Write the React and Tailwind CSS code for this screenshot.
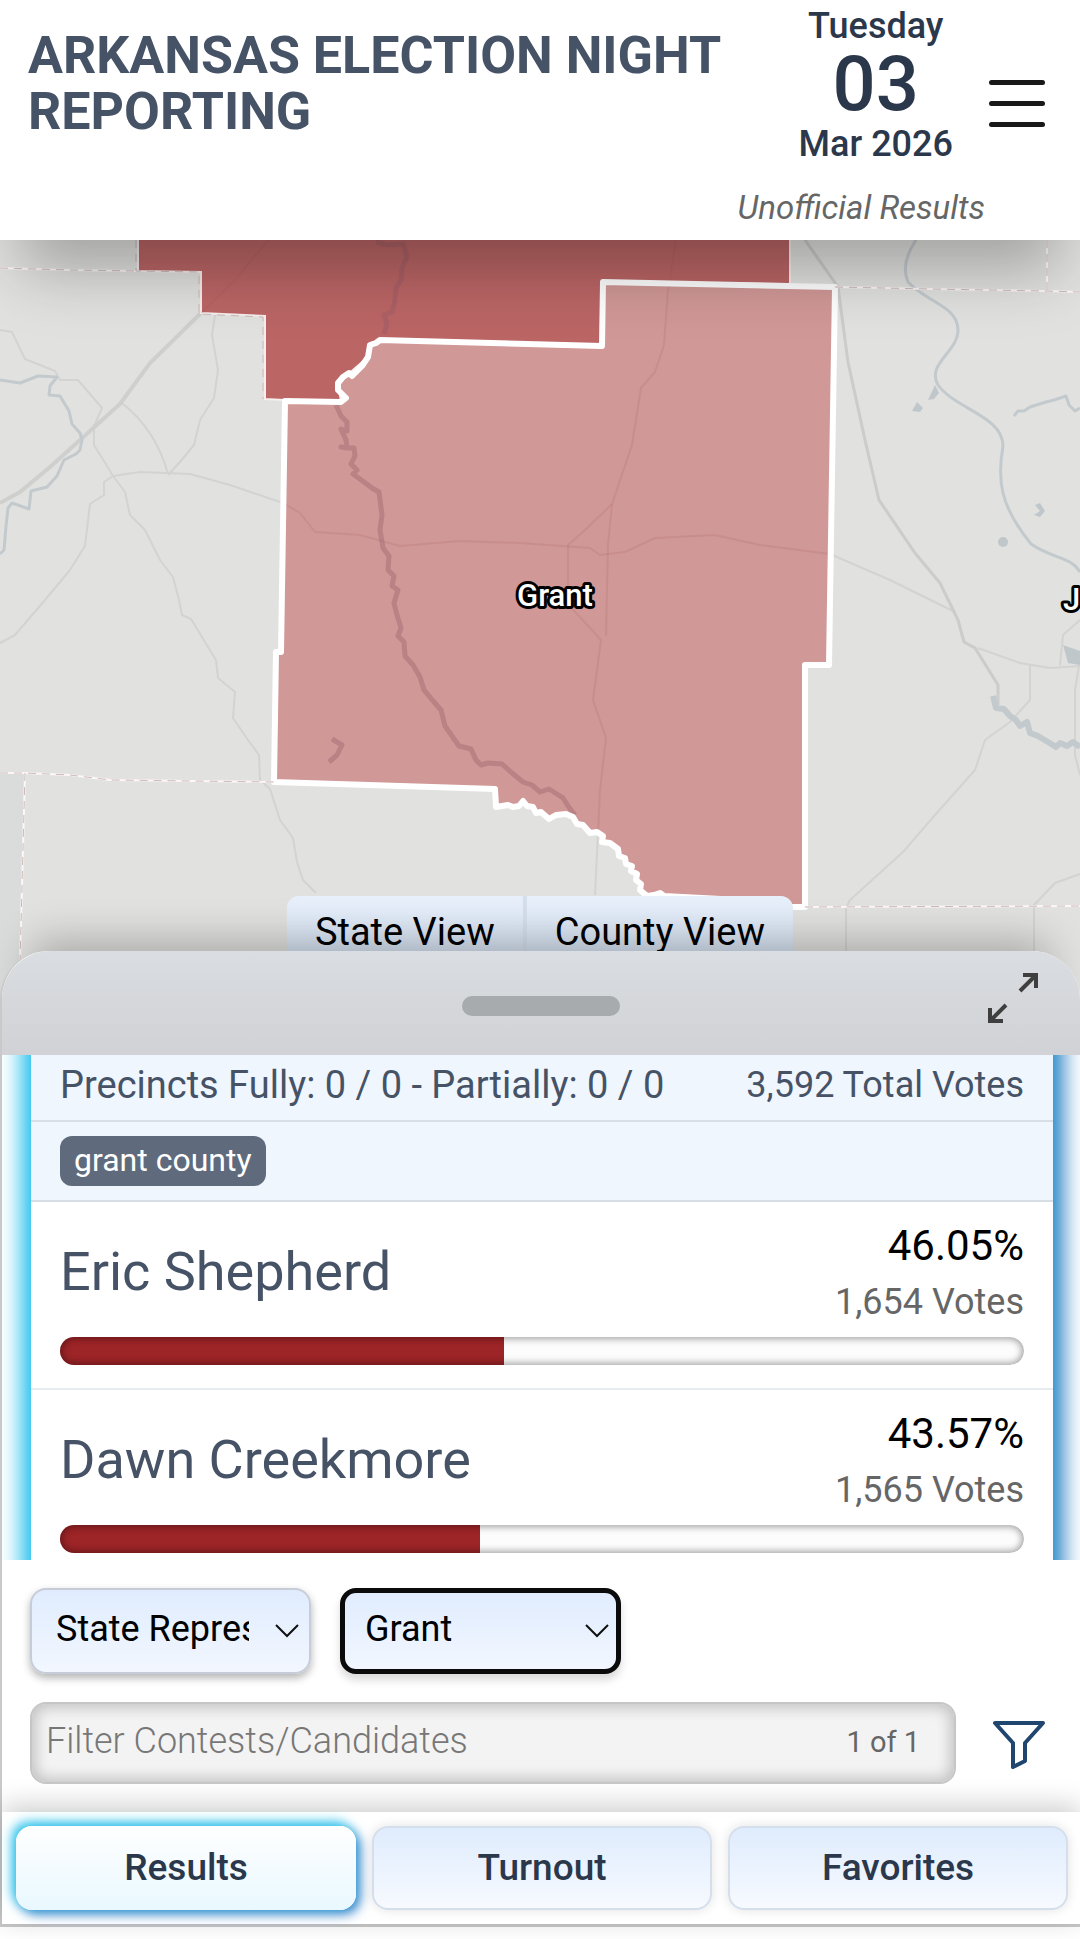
import { useState } from 'react';

const CANDIDATES = [
  { name: 'Eric Shepherd',  percent: 46.05, votes: '1,654' },
  { name: 'Dawn Creekmore', percent: 43.57, votes: '1,565' },
];

const TABS = ['Results', 'Turnout', 'Favorites'];

const GRANT_OUTLINE =
  'M285 401 L341 402 L346 398 L338 390 L338 383 L343 377 L349 373 L352 376 L362 366 L368 357 L370 345 L376 343 L380 340 L602 346 L603 282 L835 287 L830 600 L829 665 L805 665 L805 907 L790 907 L740 900 L664 896 L660 893 L654 895 L647 896 L640 890 L641 884 L636 880 L637 874 L631 871 L632 866 L626 864 L625 858 L619 856 L618 849 L610 843 L602 842 L603 836 L597 832 L590 833 L583 825 L577 824 L573 817 L566 814 L556 815 L549 819 L541 812 L536 813 L533 807 L527 806 L523 801 L519 806 L513 807 L508 805 L496 807 L495 789 L274 782 L276 652 L281 652 Z';

const SALINE_OUTLINE =
  'M138 230 L138 271 L201 272 L201 313 L265 316 L265 399 L285 400 L341 402 L338 383 L368 357 L371 343 L380 340 L602 346 L603 282 L790 284 L790 230 Z';

// roads and rail lines
const ROADS = [
  'M268 240 L235 280 L200 314 L150 363 L120 404 L80 440 L50 467 L20 492 L0 503',
  'M215 315 L212 335 L218 370 L214 398 L200 420 L194 445 L180 462 L168 475',
  'M122 403 Q156 430 168 474',
  'M94 424 L94 445 L104 461 L113 476 L125 492 L130 515 L145 530 L160 560 L173 577 L179 600 L182 615 L191 619 L205 642 L216 660 L218 678 L235 692 L233 718 L248 740 L259 755 L260 780 L270 789 L280 820 L293 838 L297 862 L303 880 L316 893',
  'M113 476 L140 472 L190 474 L230 485 L283 503 L300 513 L315 532 L360 535 L400 546 L460 541 L520 543 L590 548 L600 555 L625 552 L655 538 L715 535 L760 545 L830 554 L890 580 L955 612',
  'M113 476 L104 482 L104 495 L90 504 L85 546 L70 570 L45 600 L15 635 L0 643',
  'M0 330 L12 332 L25 359 L55 371 L60 380 L78 380 L102 408 L95 424',
  'M676 240 L668 290 L664 345 L655 372 L641 388 L632 445 L612 504 L585 530 L568 545 L568 604 L601 640 L593 700 L606 738 L600 790 L595 895',
  'M612 504 L608 545 L606 636',
  'M805 240 L838 287 L848 362 L865 440 L879 500 L915 553 L940 583 L958 620 L964 642 L975 648 L998 685 L998 705',
  'M978 648 L1020 663 L1050 668 L1080 666',
  'M1080 620 L1063 635 L1060 665',
  'M1030 665 L1030 700 L1010 722 L985 740 L975 770 L935 815 L903 852 L850 900 L846 908 L846 960',
  'M1080 874 L1055 883 L1034 905 L1034 960',
  'M1080 660 L1075 690 L1075 755 L1080 775',
];

const RIVERS = [
  'M0 380 L20 383 L38 376 L57 377 L50 386 L49 395 L60 396 L69 411 L72 424 L80 433 L82 440 L80 450 L76 454 L64 460 L57 476 L47 487 L31 491 L29 509 L12 503 L8 508 L6 526 L4 550 L0 554',
  'M916 240 Q900 264 908 282 C926 302 958 306 958 330 C958 352 926 364 938 385 C955 409 1003 416 1003 446 C997 480 1000 506 1031 544 C1055 560 1070 556 1080 572',
  'M1014 416 L1018 411 L1024 411 L1030 407 L1046 402 L1054 400 L1066 396 L1069 405 L1075 411 L1080 408',
  'M993 696 L996 708 L1004 709 L1010 716 L1016 720 L1020 726 L1027 722 L1030 733 L1038 736 L1048 742 L1056 747 L1060 743 L1067 746 L1073 742 L1080 747',
];

const CREEKS = [
  'M376 242 L387 245 L403 244 L407 256 L402 268 L401 280 L396 288 L395 300 L392 312 L384 315 L387 323 L384 334',
  'M336 405 L341 416 L347 422 L347 431 L341 429 L346 440 L347 448 L341 447 L354 448 L355 456 L351 464 L357 470 L353 474 L364 482 L372 488 L379 492 L382 515 L380 530 L383 548 L389 556 L388 570 L394 576 L392 586 L398 590 L394 603 L397 615 L401 628 L398 636 L404 642 L405 656 L413 665 L420 677 L424 690 L434 702 L441 710 L445 726 L452 736 L459 746 L471 749 L476 760 L481 765 L488 763 L502 764 L512 773 L523 782 L532 785 L540 792 L549 789 L557 794 L563 798 L568 806 L575 815',
];

// dashed county borders
const BORDERS = [
  'M0 268 L70 270 L138 271',
  'M835 287 L930 289 L1046 291 L1080 292',
  'M1047 240 L1047 291',
  'M0 773 L25 773 L70 775 L110 780 L274 782',
  'M25 773 L19 1000',
  'M805 907 L1080 906',
];

function CountyMap() {
  return (
    <svg
      viewBox="0 240 1080 760"
      preserveAspectRatio="xMidYMin slice"
      className="block h-[760px] w-full"
      role="img"
      aria-label="Map of Grant county"
    >
      <defs>
        <clipPath id="counties">
          <path d={GRANT_OUTLINE} />
          <path d={SALINE_OUTLINE} />
        </clipPath>
      </defs>
      <rect x="0" y="230" width="1080" height="780" fill="#e1e1df" />
      <path d="M0 773 L25 773 L19 1000 L0 1000 Z" fill="#d9dcda" />

      <g fill="none" stroke="#d3d3d2" strokeWidth="2" strokeLinejoin="round">
        {ROADS.map((d) => <path key={d} d={d} />)}
      </g>
      <path d={ROADS[0]} fill="none" stroke="#cfcfce" strokeWidth="4" />
      <path d={ROADS[9]} fill="none" stroke="#cccccb" strokeWidth="3" />
      <g fill="none" stroke="#c3cace" strokeWidth="3" strokeLinejoin="round">
        {RIVERS.map((d) => <path key={d} d={d} />)}
      </g>
      <path d={RIVERS[3]} fill="none" stroke="#c3cace" strokeWidth="6" strokeLinejoin="round" />
      <g fill="#c0c7cb">
        <path d="M1063 645 L1080 651 L1080 665 L1068 663 Z" />
        <path d="M912 411 L917 402 L923 408 L920 412 Z" />
        <path d="M935 385 L939 393 L934 399 L928 400 Z" />
        <circle cx="1003" cy="542" r="5" />
        <path d="M1035 505 L1040 503 L1045 511 L1040 517 L1034 515 L1040 511 Z" />
      </g>

      <path d={SALINE_OUTLINE} fill="#bb6565" stroke="#f7eeee" strokeWidth="2" />
      <path d={GRANT_OUTLINE} fill="#d09896" />
      <g clipPath="url(#counties)" fill="none" stroke="#9c5459" strokeLinejoin="round">
        <g strokeOpacity="0.14" strokeWidth="2">
          {ROADS.map((d) => <path key={d} d={d} />)}
        </g>
        <g stroke="#935a66" strokeOpacity="0.35" strokeWidth="5">
          {CREEKS.map((d) => <path key={d} d={d} />)}
          <path d="M332 739 L342 745 L337 755 L329 762" />
        </g>
      </g>
      <path d={GRANT_OUTLINE} fill="none" stroke="#fff" strokeWidth="6" strokeLinejoin="round" />

      <g fill="none" stroke="#fbf8f7" strokeWidth="2">
        {BORDERS.map((d) => <path key={d} d={d} />)}
      </g>
      <g fill="none" stroke="#cdb9b9" strokeWidth="1" strokeDasharray="8 6">
        {BORDERS.map((d) => <path key={d} d={d} />)}
        <path d="M136 240 L136 271 L199 272 L199 314 L263 317 L263 399" />
      </g>

      <g
        className="font-['Roboto',sans-serif] text-[31px] font-medium"
        fill="#fff"
        stroke="#000"
        strokeWidth="6"
        strokeLinejoin="round"
        paintOrder="stroke"
      >
        <text x="555" y="606" textAnchor="middle">Grant</text>
        <text x="1063" y="610">J</text>
      </g>
    </svg>
  );
}

function Header() {
  return (
    <header className="relative z-10 h-60 bg-white pr-[35px] pl-7 shadow-[0_50px_60px_-20px_rgba(0,0,0,0.28)]">
      <div className="flex justify-between">
        <h1 className="pt-7 text-[52px] leading-14 font-bold text-[#465366] uppercase">
          Arkansas Election Night<br />Reporting
        </h1>
        <div className="flex items-start gap-9">
          <div className="text-center text-[36px] leading-12 font-medium text-[#2b384c]">
            <p className="pt-0.5">Tuesday</p>
            <p className="text-[76px] leading-17">03</p>
            <p className="pt-0.5">Mar 2026</p>
          </div>
          <button type="button" aria-label="Menu" className="mt-20 flex w-14 flex-col gap-4">
            <span className="h-[5px] w-full rounded-full bg-[#191919]" />
            <span className="h-[5px] w-full rounded-full bg-[#191919]" />
            <span className="h-[5px] w-full rounded-full bg-[#191919]" />
          </button>
        </div>
      </div>
      <p className="mt-5 pr-15 text-right text-[33px] leading-10 text-[#666] italic">Unofficial Results</p>
    </header>
  );
}

function CandidateRow({ name, percent, votes }) {
  return (
    <li className="h-[188px] border-b-2 border-[#e6ecf0] px-[29px] pt-4">
      <div className="flex items-start justify-between">
        <h2 className="pt-[22px] text-[54px] leading-16 text-[#465366]">{name}</h2>
        <div className="text-right">
          <p className="text-[42px] leading-14 text-black">{percent}%</p>
          <p className="text-[36px] leading-14 text-[#666]">{votes} Votes</p>
        </div>
      </div>
      <div className="relative mt-[7px] h-7 overflow-hidden rounded-full bg-[#fcfcfc]">
        <div className="h-full bg-[#9d2427]" style={{ width: `${percent}%` }} />
        <div className="absolute inset-0 rounded-full shadow-[inset_0_0_7px_2px_rgba(0,0,0,0.35)]" />
      </div>
    </li>
  );
}

function ContestCard() {
  return (
    <div className="h-[505px] overflow-hidden bg-white">
      {/* card is scrolled part of the way under the handle */}
      <article className="-mt-10 mr-[27px] ml-[29px] bg-white pt-10 pb-10 shadow-[-9px_0_22px_#22c4ee,9px_0_22px_#1c72bd]">
        <div className="bg-[#f0f6fe]">
          <div className="flex h-[67px] justify-between border-b-2 border-[#d8dee6] px-[29px] pt-1 leading-13 text-[#465366]">
            <span className="text-[38px]">Precincts Fully: 0 / 0 - Partially: 0 / 0</span>
            <span className="text-[36px]">3,592 Total Votes</span>
          </div>
          <div className="flex h-20 items-center border-b-2 border-[#d8dee6] px-[29px]">
            <span className="rounded-xl bg-[#5f6b7d] px-[14px] pb-0.5 text-[32px] leading-12 text-white">grant county</span>
          </div>
        </div>
        <ul>
          {CANDIDATES.map((c) => <CandidateRow key={c.name} {...c} />)}
        </ul>
      </article>
    </div>
  );
}

function FilterSelect({ label, option, focused }) {
  return (
    <div className="relative">
      <select
        aria-label={label}
        className={
          focused
            ? 'block h-[86px] w-[281px] appearance-none rounded-2xl border-5 border-[#0b0b0b] bg-linear-to-b from-[#e0ecfe] to-[#f2f7ff] pr-14 pb-1 pl-5 text-[36px] text-black shadow-[0_6px_8px_rgba(0,0,0,0.15)]'
            : 'block h-[86px] w-[281px] appearance-none rounded-2xl border-2 border-[#c6cdd8] bg-linear-to-b from-[#e0ecfe] to-[#f2f7ff] pr-15 pb-1 pl-6 text-[36px] text-black shadow-[0_4px_8px_rgba(0,0,0,0.3)]'
        }
      >
        <option>{option}</option>
      </select>
      <svg viewBox="0 0 24 14" className="pointer-events-none absolute top-9 right-3 h-[14px] w-6" fill="none" stroke="#111" strokeWidth="2">
        <path d="M1 1 L12 12 L23 1" />
      </svg>
    </div>
  );
}

export default function App() {
  const [tab, setTab] = useState('Results');

  return (
    <div className="flex min-h-screen flex-col overflow-hidden bg-white font-['Roboto',sans-serif]">
      <Header />

      <div className="relative">
        <CountyMap />
        <div className="absolute bottom-10 left-1/2 flex -translate-x-1/2 overflow-hidden rounded-t-xl bg-linear-to-b from-[#e8f0fb] to-[#d5e1f1] text-[38px] leading-18 text-black">
          <button type="button" className="h-16 border-r-4 border-[#d5dfec] px-7 whitespace-nowrap">State View</button>
          <button type="button" className="h-16 px-7 whitespace-nowrap">County View</button>
        </div>
      </div>

      <main className="relative -mt-[49px] rounded-t-[48px] border-b-3 border-l-2 border-[#c9c9c9] bg-white shadow-[0_-40px_40px_-30px_rgba(0,0,0,0.25)]">
        <div className="relative flex h-26 items-center justify-center rounded-t-[48px] bg-linear-to-b from-[#dadde1] to-[#d0d2d5]">
          <span className="mt-1.5 h-5 w-[158px] rounded-full bg-[#a7abae]" />
          <button type="button" aria-label="Expand" className="absolute top-5 right-10">
            <svg viewBox="0 0 54 54" className="size-[54px]" fill="none" stroke="#3f3f3f" strokeWidth="4">
              <path d="M34 20 L50 4 M37 4 H50 V17" />
              <path d="M20 34 L4 50 M4 37 V50 H17" />
            </svg>
          </button>
        </div>

        <ContestCard />

        <div className="flex gap-[29px] px-7 pt-7">
          <FilterSelect label="Contest" option="State Representative" />
          <FilterSelect label="County" option="Grant" focused />
        </div>
        <div className="mt-7 mb-7 flex items-center pr-[34px] pl-7">
          <div className="relative flex-1">
            <input
              type="text"
              aria-label="Filter contests"
              placeholder="Filter Contests/Candidates"
              className="block h-[82px] w-full rounded-2xl border-2 border-[#c6c6c6] bg-[#f3f3f3] pr-32 pb-1 pl-[14px] text-[36px] font-light shadow-[inset_0_0_14px_4px_rgba(0,0,0,0.2)] placeholder:text-[#777]"
            />
            <span className="absolute top-1/2 right-9 -translate-y-1/2 text-[29px] text-[#666]">1 of 1</span>
          </div>
          <button type="button" aria-label="Filter" className="mt-1 ml-9">
            <svg viewBox="0 0 54 52" className="h-[52px] w-[54px]" fill="none" stroke="#20466f" strokeWidth="4" strokeLinejoin="round">
              <path d="M3 4 H51 L33 24 V42 L21 48 V24 Z" />
            </svg>
          </button>
        </div>

        <nav className="grid grid-cols-3 gap-4 bg-white pt-[14px] pr-3 pb-[14px] pl-[14px] shadow-[0_-6px_26px_rgba(0,0,0,0.2)]">
          {TABS.map((name) => (
            <button
              key={name}
              type="button"
              onClick={() => setTab(name)}
              className={
                name === tab
                  ? 'h-[84px] rounded-2xl bg-linear-to-b from-white to-[#e9f8ff] text-[37px] font-medium text-[#2b384c] shadow-[-4px_-4px_12px_#2cc5ec,4px_4px_12px_#2a7cc6]'
                  : 'h-[84px] rounded-2xl border-2 border-[#d5dfeb] bg-linear-to-b from-[#dfecfd] to-[#f7faff] text-[37px] font-medium text-[#2b384c] shadow-[0_0_12px_rgba(0,0,0,0.12)]'
              }
            >
              {name}
            </button>
          ))}
        </nav>
      </main>
    </div>
  );
}
